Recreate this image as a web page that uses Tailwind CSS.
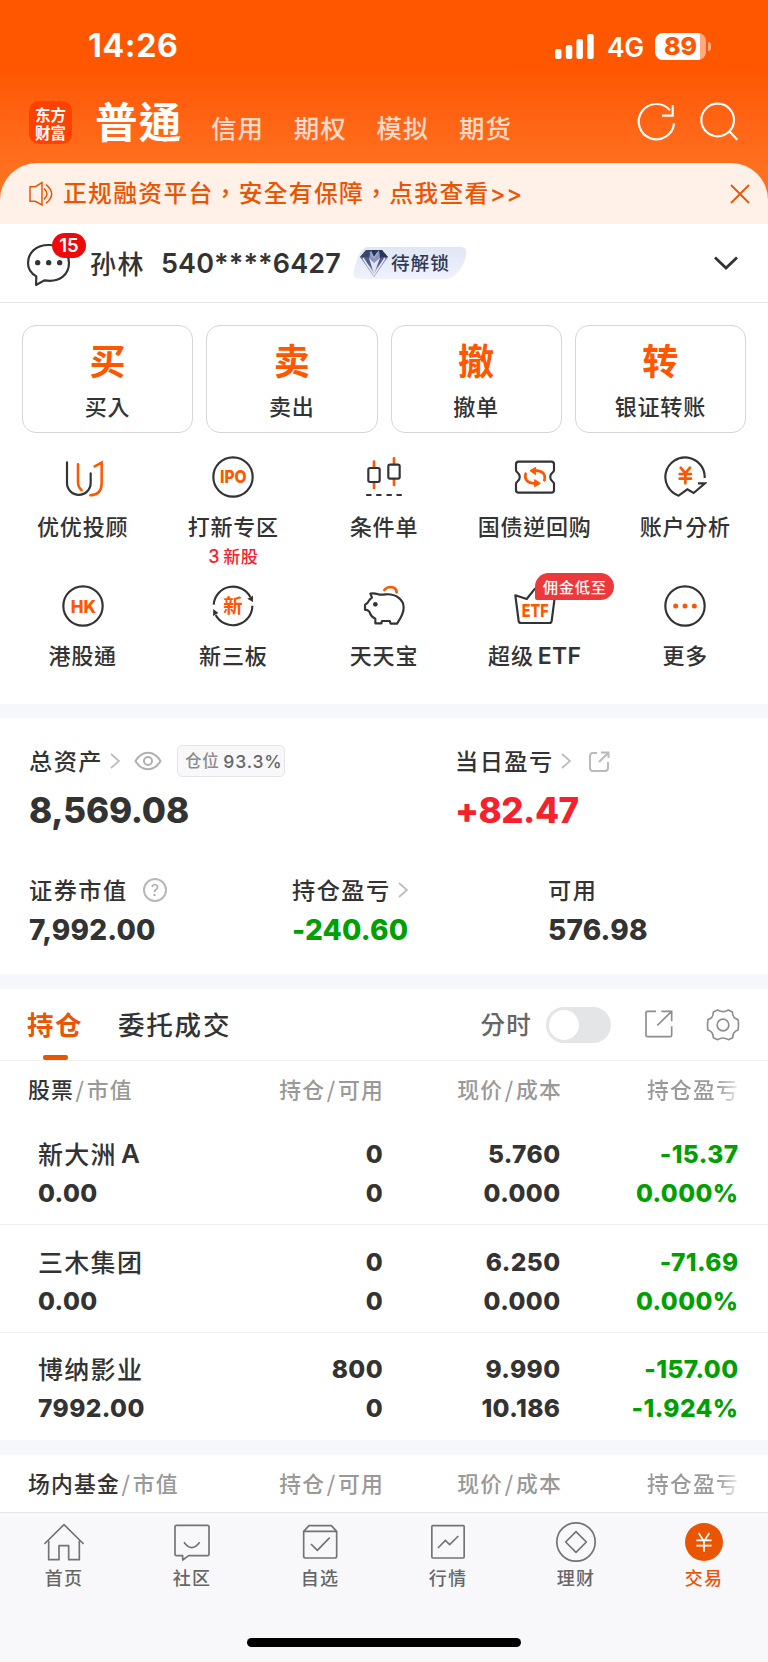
<!DOCTYPE html>
<html lang="zh-TW">
<head>
<meta charset="utf-8">
<meta name="viewport" content="width=device-width, initial-scale=1">
<title>交易</title>
<script src="https://cdn.jsdelivr.net/npm/@tailwindcss/browser@4"></script>
</head>
<body class="bg-white">
<div class="w-[768px] h-[1662px] overflow-hidden flex flex-col bg-white text-[#333] whitespace-nowrap font-['Noto_Sans_CJK_TC','Noto_Sans_CJK_SC',sans-serif] font-medium">

  <!-- Header -->
  <header class="h-[224px] shrink-0 flex flex-col bg-linear-to-b from-[#ff5600] from-30% to-[#ff701f] to-75% text-white">
    <div class="h-[92px] flex items-center pl-[88px] pr-[57px]">
      <div class="font-['Inter'] font-bold text-[32px] leading-[40px] tracking-[0.7px]">14:26</div>
      <svg class="ml-auto" width="40" height="26" viewBox="0 0 40 26" fill="#fff"><rect x="1" y="16" width="6.5" height="10" rx="2"/><rect x="11.8" y="12" width="6.5" height="14" rx="2"/><rect x="22.4" y="6" width="6.5" height="20" rx="2"/><rect x="33.2" y="1" width="6.5" height="25" rx="2"/></svg>
      <div class="ml-[13px] pt-[2px] font-['Inter'] font-semibold text-[26.5px] leading-[40px] tracking-[-0.5px] w-[37px]">4G</div>
      <div class="ml-[11px] w-[51px] h-[27px] rounded-[8px] bg-linear-to-r from-white from-[45px] to-[#ffaa80] to-[45px] text-center text-[#ff5600] font-['Inter'] font-extrabold text-[25px] leading-[27px]">89</div>
      <div class="ml-[2px] w-[3px] h-[9px] rounded-r-full bg-[#ffaa80]"></div>
    </div>
    <div class="h-[71px] flex pl-[29px] pr-[29px]">
      <div lang="zh-CN" class="mt-[9px] size-[43px] rounded-[10px] bg-[#ff4100] flex flex-col items-center justify-center font-['Noto_Sans_CJK_SC'] font-bold text-[15.5px] leading-[18px]"><span>东方</span><span>财富</span></div>
      <div class="ml-[23px] mt-[-2px] text-[42.5px] leading-[60px] tracking-[1.3px] font-bold">普通</div>
      <div class="ml-[28.500px] mt-[16px] flex gap-[29.6px] text-[25.5px] leading-[38px] tracking-[1px] text-[#ffdac8]"><span>信用</span><span>期权</span><span>模拟</span><span>期货</span></div>
      <svg class="ml-auto mt-[8px]" width="104" height="44" viewBox="750 300 312 132" fill="none" stroke="#fff" stroke-width="6.5"><path d="M867 370A53 53 0 1 1 855 331M863 315V347H831"/><circle cx="998" cy="360" r="49"/><path d="M1033 394L1057 419"/></svg>
    </div>
    <div class="h-[61px] rounded-t-[37px] bg-[#fff0e8] flex items-center pl-[28px] pr-[18px] text-[#ea5504]">
      <svg width="26" height="28" viewBox="84 540 78 84" fill="none" stroke="#ea5504" stroke-width="4.5"><path d="M90 560H106L126 548V615L106 604H90ZM132 566q18 16 0 32M138 554q34 28 0 56"/></svg>
      <div class="ml-[9px] mt-[-1px] text-[23.8px] leading-[36px] tracking-[1.3px]">正规融资平台，安全有保障，点我查看<span class="font-['Inter'] tracking-[0.6px]">&gt;&gt;</span></div>
      <svg class="ml-auto" width="20" height="20" viewBox="0 0 20 20" fill="none" stroke="#ea5504" stroke-width="1.8"><path d="M1 1L19 19M19 1L1 19"/></svg>
    </div>
  </header>

  <!-- Account -->
  <section class="h-[79px] shrink-0 border-b border-[#e8e8e8] flex items-center pl-[26px] pr-[29px]">
    <div class="relative mt-[-7px] w-[64px] h-[56px]">
      <svg width="64" height="56" viewBox="78 32 192 168" fill="none" stroke="#333" stroke-width="6.5" stroke-linejoin="round"><path d="M146 71C108 71 84 94 84 125C84 143 93 156 109 165L108 191L133 177C182 185 207 157 207 125C207 94 184 71 146 71Z"/><g fill="#333" stroke="none"><circle cx="113" cy="124" r="8"/><circle cx="146" cy="124" r="8"/><circle cx="179" cy="124" r="8"/></g></svg>
      <div class="absolute left-[26px] top-[1px] w-[34px] h-[25px] rounded-full bg-[#ee0a0a] text-white text-center font-['Inter'] font-semibold text-[18.5px] leading-[25px]">15</div>
    </div>
    <div class="text-[26px] leading-[40px] tracking-[1.5px]">孙林</div>
    <div class="ml-[16px] mt-[1px] font-['Inter'] font-semibold text-[27px] leading-[40px] tracking-[0.1px] w-[179px]">540****6427</div>
    <div class="ml-[12px] relative w-[116px] h-[34px] flex items-center">
      <svg class="absolute inset-0" width="116" height="34" viewBox="0 0 116 34"><defs><linearGradient id="pill" x1="0" y1="0" x2="0" y2="1"><stop offset="0" stop-color="#e1e6f5"/><stop offset="1" stop-color="#eff2fd"/></linearGradient></defs><path d="M16 1H108Q116 1 114 10Q108 33 90 33H8Q0 33 2 24Q7 1 16 1Z" fill="url(#pill)"/></svg>
      <svg class="relative ml-[7px] mt-[-1px]" width="30" height="30" viewBox="0 0 30 30"><path d="M7 2L23 2L29 9L15 29L1 9Z" fill="#8a94b8"/><path d="M7 2L12 2L10 10L1 9Z" fill="#3a4668"/><path d="M12 2H20L15 9Z" fill="#26335a"/><path d="M20 2H23L29 9L21 10Z" fill="#2b3558"/><path d="M1 9L10 10L15 22Z" fill="#4f5c8b"/><path d="M29 9L21 10L15 22Z" fill="#5d5596"/><path d="M10 10L15 15L21 10L15 26Z" fill="#dfe5f2"/><path d="M4 10L15 27L26 10" fill="none" stroke="#e7ebf4" stroke-width="1.4"/><path d="M11 4L15 10L19 4" fill="none" stroke="#9fb0d0" stroke-width="1.2"/></svg>
      <div class="relative ml-[2px] mt-[-2px] text-[18.7px] leading-[30px] tracking-[0.9px] text-[#2f3a55]">待解锁</div>
    </div>
    <svg class="ml-auto" width="26" height="16" viewBox="0 0 26 16" fill="none" stroke="#333" stroke-width="2.8"><path d="M2 2.5L13 13L24 2.5"/></svg>
  </section>

  <!-- Trade actions -->
  <section class="mt-[22px] h-[108px] shrink-0 px-[22px] grid grid-cols-4 gap-[13px] text-center">
    <div class="rounded-[14px] border border-[#d6d6d6] pt-[7px]"><div class="text-[36px] leading-[52px] font-bold text-[#ff5600]">买</div><div class="text-[22px] leading-[32px] tracking-[0.8px] mt-[4px]">买入</div></div>
    <div class="rounded-[14px] border border-[#d6d6d6] pt-[7px]"><div class="text-[36px] leading-[52px] font-bold text-[#ff5600]">卖</div><div class="text-[22px] leading-[32px] tracking-[0.8px] mt-[4px]">卖出</div></div>
    <div class="rounded-[14px] border border-[#d6d6d6] pt-[7px]"><div class="text-[36px] leading-[52px] font-bold text-[#ff5600]">撤</div><div class="text-[22px] leading-[32px] tracking-[0.8px] mt-[4px]">撤单</div></div>
    <div class="rounded-[14px] border border-[#d6d6d6] pt-[7px]"><div class="text-[36px] leading-[52px] font-bold text-[#ff5600]">转</div><div class="text-[22px] leading-[32px] tracking-[0.8px] mt-[4px]">银证转账</div></div>
  </section>

  <!-- Shortcuts -->
  <section class="mt-[22px] h-[249px] shrink-0 px-[7.33px] grid grid-cols-5 auto-rows-[129px] text-[22px] leading-[32px] tracking-[0.8px]">
    <div class="flex flex-col items-center">
      <svg width="44" height="44" viewBox="182 46 132 132" fill="none" stroke-width="6.500" stroke-linecap="round"><path stroke="#333" d="M200 68V130A35.500 35.500 0 0 0 271 130V101"/><path stroke="#ff5600" stroke-width="7.500" d="M233 74V128Q233 143 244 152M283 80L304 69V130Q304 166 270 167"/></svg>
      <div class="mt-[10px]">优优投顾</div>
    </div>
    <div class="flex flex-col items-center">
      <svg width="44" height="44" viewBox="634 46 132 132"><circle cx="700" cy="112" r="59" fill="none" stroke="#333" stroke-width="6.500"/><text x="661" y="131" textLength="80" lengthAdjust="spacingAndGlyphs" class="font-['Inter'] font-extrabold tracking-normal" font-size="52" fill="#ff5600">IPO</text></svg>
      <div class="mt-[10px]">打新专区</div>
      <div class="mt-[2px] text-[17px] leading-[24px] tracking-[0.6px] text-[#f5222d] flex items-center gap-[3px]"><span class="font-['Inter'] text-[18px] mt-[2px]">3</span><span>新股</span></div>
    </div>
    <div class="flex flex-col items-center">
      <svg width="44" height="44" viewBox="1086 46 132 132" fill="none" stroke="#333" stroke-width="6.500"><path stroke="#ff5600" stroke-width="8" stroke-linecap="round" d="M1122 66V82M1122 130V145M1182 56V72M1182 120V136"/><rect x="1105" y="85" width="34" height="42" rx="5"/><rect x="1165" y="75" width="34" height="42" rx="5"/><path stroke-linecap="round" d="M1101 166H1112M1131 166H1142M1162 166H1173M1192 166H1203"/></svg>
      <div class="mt-[10px]">条件单</div>
    </div>
    <div class="flex flex-col items-center">
      <svg width="44" height="44" viewBox="386 46 132 132" fill="none" stroke="#333" stroke-width="6.500"><path d="M403 66H501Q509 66 509 74V92Q509 96 505 98A17 17 0 0 0 505 126Q509 128 509 132V151Q509 159 501 159H403Q395 159 395 151V132Q395 128 399 126A17 17 0 0 0 399 98Q395 96 395 92V74Q395 66 403 66Z"/><path stroke="#ff5600" stroke-width="8" stroke-linecap="round" d="M424 102C419 120 430 130 448 131M480 122C485 103 475 94 456 93"/><path fill="#ff5600" stroke="#ff5600" stroke-width="3" stroke-linejoin="round" d="M437 93L454 83V105ZM468 131L451 120V141Z"/></svg>
      <div class="mt-[10px]">国债逆回购</div>
    </div>
    <div class="flex flex-col items-center">
      <svg width="44" height="44" viewBox="838 46 132 132" fill="none" stroke="#333" stroke-width="6.500"><path d="M963 115A59 59 0 1 0 885 168L911 149L930 160L964 131H943"/><path stroke="#ff5600" stroke-width="8" stroke-linecap="round" d="M891 84L905 101L919 84M905 101V131M888 103H922M888 117H922"/></svg>
      <div class="mt-[10px]">账户分析</div>
    </div>
    <div class="flex flex-col items-center">
      <svg width="44" height="44" viewBox="182 433 132 132"><circle cx="248" cy="499" r="59" fill="none" stroke="#333" stroke-width="6.500"/><text x="211" y="519" textLength="76" lengthAdjust="spacingAndGlyphs" class="font-['Inter'] font-extrabold tracking-normal" font-size="53" fill="#ff5600">HK</text></svg>
      <div class="mt-[10px]">港股通</div>
    </div>
    <div class="flex flex-col items-center">
      <svg width="44" height="44" viewBox="634 433 132 132"><path d="M642 495A58.500 58.500 0 0 1 752 472M758 498A58.500 58.500 0 0 1 648 526" fill="none" stroke="#333" stroke-width="6.500"/><path d="M743 477L760 468L760 487ZM640 529L641 508L656 520Z" fill="#333"/><text x="671" y="521" class="font-bold tracking-normal" font-size="58" fill="#ff5600">新</text></svg>
      <div class="mt-[10px]">新三板</div>
    </div>
    <div class="flex flex-col items-center">
      <svg width="44" height="44" viewBox="1086 433 132 132" fill="none" stroke="#333" stroke-width="6.500" stroke-linejoin="round"><path d="M1111 462Q1122 460 1135 464Q1143 466 1156 464C1188 461 1211 480 1211 504C1211 524 1201 535 1191 552H1172L1169 544H1146L1144 551H1126V537Q1113 532 1108 516Q1104 511 1095 510V495Q1103 492 1107 483Q1110 478 1116 474Z"/><circle cx="1126" cy="494" r="7" fill="#333" stroke="none"/><path stroke="#ff5600" stroke-width="8" stroke-linecap="round" d="M1153 451Q1160 442 1172 442Q1189 443 1190 458"/></svg>
      <div class="mt-[10px]">天天宝</div>
    </div>
    <div class="relative flex flex-col items-center">
      <svg width="44" height="44" viewBox="386 433 132 132"><path d="M393 467L427 478L452 447L479 478L512 467L502 544Q501 550 495 550H410Q404 550 403 544Z" fill="none" stroke="#333" stroke-width="6.500" stroke-linejoin="round"/><text x="412" y="531" textLength="81" lengthAdjust="spacingAndGlyphs" class="font-['Inter'] font-extrabold tracking-normal" font-size="53" fill="#ff5600">ETF</text></svg>
      <div class="mt-[10px] flex gap-[4px]"><span>超级</span><span class="mt-[1.500px] font-['Inter'] text-[23px] font-semibold tracking-[0.300px]">ETF</span></div>
      <div class="absolute left-[76px] top-[-11px] w-[79px] h-[27px] rounded-[13.500px] rounded-bl-[2px] bg-[#ec3a3c] text-white text-center text-[15.300px] leading-[26px] tracking-[0.7px]">佣金低至</div>
    </div>
    <div class="flex flex-col items-center">
      <svg width="44" height="44" viewBox="838 433 132 132"><circle cx="904" cy="499" r="59" fill="none" stroke="#333" stroke-width="6.500"/><g fill="#ff5600"><circle cx="876" cy="499" r="7.500"/><circle cx="904" cy="499" r="7.500"/><circle cx="932" cy="499" r="7.500"/></g></svg>
      <div class="mt-[10px]">更多</div>
    </div>
  </section>

  <div class="h-[14px] shrink-0 bg-[#f6f7fa]"></div>

  <!-- Assets -->
  <section class="h-[256px] shrink-0 pl-[29px] pt-[26px] flex flex-col">
    <div class="grid grid-cols-[426px_1fr]">
      <div>
        <div class="h-[34px] flex items-center text-[23.200px] leading-[34px] tracking-[1.500px]">
          <span class="mt-[-3px]">总资产</span>
          <svg class="ml-[6px]" width="12" height="16" viewBox="0 0 12 16" fill="none" stroke="#bbb" stroke-width="1.700"><path d="M2 1L10 8L2 15"/></svg>
          <svg class="ml-[13px]" width="28" height="20" viewBox="0 0 28 20" fill="none" stroke="#b0b0b0" stroke-width="2"><path d="M1.500 10C8-1 20-1 26.500 10C20 21 8 21 1.500 10Z"/><circle cx="14" cy="10" r="4"/></svg>
          <div class="ml-[15px] w-[108px] h-[32px] rounded-[5px] border border-[#e4e5ea] bg-[#f8f8fb] pl-[7px] flex items-center gap-[4px] text-[16.500px] tracking-[0.600px] text-[#8c8c8c]"><span class="mt-[-2px]">仓位</span><span class="font-['Inter'] text-[17.500px] tracking-[0.900px] text-[#666] mt-[1px]">93.3%</span></div>
        </div>
        <div class="mt-[10px] font-['Inter'] font-extrabold text-[35px] leading-[44px] tracking-[-0.200px]">8,569.08</div>
      </div>
      <div>
        <div class="h-[34px] flex items-center text-[23.200px] leading-[34px] tracking-[1.500px]">
          <span class="mt-[-3px]">当日盈亏</span>
          <svg class="ml-[6px]" width="12" height="16" viewBox="0 0 12 16" fill="none" stroke="#bbb" stroke-width="1.700"><path d="M2 1L10 8L2 15"/></svg>
          <svg class="ml-[16px] mt-[2px]" width="22" height="22" viewBox="0 0 22 22" fill="none" stroke="#bbb" stroke-width="2"><path d="M9 2H5Q2 2 2 5V17Q2 20 5 20H17Q20 20 20 17V11M13 1.500H20.500V7M20 2L11 11"/></svg>
        </div>
        <div class="mt-[10px] font-['Inter'] font-extrabold text-[35px] leading-[44px] text-[#f5222d] tracking-[-0.500px]">+82.47</div>
      </div>
    </div>
    <div class="mt-[41px] grid grid-cols-[263px_256px_1fr]">
      <div>
        <div class="h-[34px] flex items-center text-[23.200px] leading-[34px] tracking-[1.500px]"><span class="mt-[-3px]">证券市值</span>
          <div class="ml-[15px] size-[24px] rounded-full border-2 border-[#b8b8b8] text-[#a8a8a8] text-center font-['Inter'] font-normal text-[16px] leading-[20px] tracking-normal">?</div>
        </div>
        <div class="mt-[5px] font-['Inter'] font-extrabold text-[28px] leading-[36px] tracking-[0.200px]">7,992.00</div>
      </div>
      <div>
        <div class="h-[34px] flex items-center text-[23.200px] leading-[34px] tracking-[1.500px]"><span class="mt-[-3px]">持仓盈亏</span><svg class="ml-[6px]" width="12" height="16" viewBox="0 0 12 16" fill="none" stroke="#bbb" stroke-width="1.700"><path d="M2 1L10 8L2 15"/></svg></div>
        <div class="mt-[5px] font-['Inter'] font-extrabold text-[28px] leading-[36px] tracking-[0.200px] text-[#00a000]">-240.60</div>
      </div>
      <div>
        <div class="h-[34px] flex items-center text-[23.200px] leading-[34px] tracking-[1.500px]"><span class="mt-[-3px]">可用</span></div>
        <div class="mt-[5px] font-['Inter'] font-extrabold text-[28px] leading-[36px] tracking-[0.200px]">576.98</div>
      </div>
    </div>
  </section>

  <div class="h-[15px] shrink-0 bg-[#f6f7fa]"></div>

  <!-- Tabs -->
  <section class="h-[72px] shrink-0 border-b border-[#f0f0f0] flex pl-[27px] pr-[28px]">
    <div class="flex flex-col items-center text-[26.500px] leading-[40px] tracking-[1.500px] font-bold text-[#ea5504] w-[56px]"><span class="mt-[15px]">持仓</span><span class="mt-[11px] w-[25px] h-[5px] rounded-[2px] bg-[#ea5504]"></span></div>
    <div class="ml-[35px] mt-[15px] text-[26.500px] leading-[40px] tracking-[1.800px]">委托成交</div>
    <div class="ml-auto mt-[15px] text-[24.500px] leading-[40px] tracking-[1.300px] text-[#666]">分时</div>
    <div class="ml-[14px] mt-[18px] w-[65px] h-[36px] rounded-full bg-[#e4e5e7] p-[3px]"><div class="size-[30px] rounded-full bg-white"></div></div>
    <svg class="ml-[34px] mt-[21px]" width="28" height="28" viewBox="782 122 84 84" fill="none" stroke="#8e8e8e" stroke-width="5"><path d="M815 126H789Q785 126 785 130V198Q785 202 789 202H858Q862 202 862 198V171M831 126H862V156M862 126L819 168"/></svg>
    <svg class="ml-[33px] mt-[19px]" width="34" height="34" viewBox="966 114 102 102" fill="none" stroke="#8e8e8e" stroke-width="5" stroke-linejoin="round"><circle cx="1017" cy="165" r="17.500"/><path d="M1001 120Q1017 130 1033 120L1045 126Q1046 145 1062 149Q1065 165 1062 180Q1046 185 1046 203L1033 209Q1017 199 1001 209L988 203Q988 185 972 180Q969 165 972 149Q988 145 988 126Z"/></svg>
  </section>

  <!-- Holdings -->
  <section class="shrink-0 h-[378px]">
    <div class="h-[55px] flex items-center px-[28px] text-[21.800px] leading-[32px] tracking-[1.200px] text-[#999]">
      <div class="w-[150px] flex gap-[1.500px]"><span class="text-[#333]">股票</span><span>/</span><span>市值</span></div>
      <div class="w-[206px] flex justify-end gap-[1.500px]"><span>持仓</span><span>/</span><span>可用</span></div>
      <div class="w-[178px] flex justify-end gap-[1.500px]"><span>现价</span><span>/</span><span>成本</span></div>
      <div class="ml-auto w-[93px] bg-linear-to-r from-[#999] from-75% to-[#99999920] bg-clip-text text-transparent">持仓盈亏</div>
    </div>
    <div class="h-[109px] border-b border-[#f0f0f0] grid grid-cols-[150px_195px_177.500px_178px] pl-[38px] pt-[18px] auto-rows-[39px] items-center text-right font-['Inter'] font-extrabold text-[24.500px] leading-[38px] tracking-[0.400px]">
      <div class="text-left flex items-center gap-[4px]"><span class="mt-[-2px] font-['Noto_Sans_CJK_TC'] font-medium text-[25px] tracking-[1.300px]">新大洲</span><span class="font-semibold text-[26px]">A</span></div><div>0</div><div>5.760</div><div class="text-[#00a000]">-15.37</div>
      <div class="text-left">0.00</div><div>0</div><div>0.000</div><div class="text-[#00a000]">0.000%</div>
    </div>
    <div class="h-[108px] border-b border-[#f0f0f0] grid grid-cols-[150px_195px_177.500px_178px] pl-[38px] pt-[17px] auto-rows-[39px] items-center text-right font-['Inter'] font-extrabold text-[24.500px] leading-[38px] tracking-[0.400px]">
      <div class="mt-[-2px] text-left font-['Noto_Sans_CJK_TC'] font-medium text-[25px] tracking-[1.300px]">三木集团</div><div>0</div><div>6.250</div><div class="text-[#00a000]">-71.69</div>
      <div class="text-left">0.00</div><div>0</div><div>0.000</div><div class="text-[#00a000]">0.000%</div>
    </div>
    <div class="h-[106px] grid grid-cols-[150px_195px_177.500px_178px] pl-[38px] pt-[16px] auto-rows-[39px] items-center text-right font-['Inter'] font-extrabold text-[24.500px] leading-[38px] tracking-[0.400px]">
      <div class="mt-[-2px] text-left font-['Noto_Sans_CJK_TC'] font-medium text-[25px] tracking-[1.300px]">博纳影业</div><div>800</div><div>9.990</div><div class="text-[#00a000]">-157.00</div>
      <div class="text-left">7992.00</div><div>0</div><div>10.186</div><div class="text-[#00a000]">-1.924%</div>
    </div>
  </section>

  <div class="mt-[1px] h-[15px] shrink-0 bg-[#f6f7fa]"></div>

  <section class="h-[57px] shrink-0 flex items-center px-[28px] pb-[2px] text-[21.800px] leading-[32px] tracking-[1.200px] text-[#999]">
    <div class="w-[150px] flex gap-[1.500px]"><span class="text-[#333]">场内基金</span><span>/</span><span>市值</span></div>
    <div class="w-[206px] flex justify-end gap-[1.500px]"><span>持仓</span><span>/</span><span>可用</span></div>
    <div class="w-[178px] flex justify-end gap-[1.500px]"><span>现价</span><span>/</span><span>成本</span></div>
    <div class="ml-auto w-[93px] bg-linear-to-r from-[#999] from-75% to-[#99999920] bg-clip-text text-transparent">持仓盈亏</div>
  </section>

  <!-- Bottom navigation -->
  <nav class="grow border-t border-[#e6e6ea] bg-[#f8f8fb] flex flex-col items-center">
    <div class="w-full mt-[8px] grid grid-cols-6 text-[18px] leading-[28px] tracking-[1.200px] text-[#666]">
      <div class="flex flex-col items-center"><svg width="42" height="42" viewBox="130 271 126 126" fill="none" stroke="#737373" stroke-width="5" stroke-linejoin="round"><path d="M134 340L193 282L252 340M147 330V387H178V345H207V387H239V330"/></svg><span>首页</span></div>
      <div class="flex flex-col items-center"><svg width="42" height="42" viewBox="514 271 126 126" fill="none" stroke="#737373" stroke-width="5" stroke-linejoin="round"><path d="M530 284H624Q628 284 628 288V371Q628 375 624 375H567L549 388V375H530Q526 375 526 371V288Q526 284 530 284ZM553 335Q576 367 600 335"/></svg><span>社区</span></div>
      <div class="flex flex-col items-center"><svg width="42" height="42" viewBox="896 271 126 126" fill="none" stroke="#737373" stroke-width="5" stroke-linejoin="round"><path d="M910 302L926 285H993L1009 302V377Q1009 382 1004 382H915Q910 382 910 377ZM910 302H1009M932 340L951 359L988 321"/></svg><span>自选</span></div>
      <div class="flex flex-col items-center"><svg width="42" height="42" viewBox="129 271 126 126" fill="none" stroke="#737373" stroke-width="5"><rect x="143.500" y="285" width="97" height="97" rx="3"/><path d="M162 352L184 329L197 342L223 316"/></svg><span>行情</span></div>
      <div class="flex flex-col items-center"><svg width="42" height="42" viewBox="513 271 126 126" fill="none" stroke="#737373" stroke-width="5" stroke-linejoin="round"><circle cx="576" cy="334" r="57.500"/><path d="M576 303L607 334L576 365L545 334Z"/></svg><span>理财</span></div>
      <div class="flex flex-col items-center text-[#ea5504]"><svg width="42" height="42" viewBox="896 271 126 126" fill="none" stroke="#fff" stroke-width="5"><circle cx="959" cy="334" r="57" fill="#ea5504" stroke="none"/><path d="M943 307L959 332L975 307M959 332V363M936 329H982M936 345H982"/></svg><span>交易</span></div>
    </div>
    <div class="mt-[47px] w-[274px] h-[9px] rounded-full bg-black"></div>
  </nav>
</div>
</body>
</html>
